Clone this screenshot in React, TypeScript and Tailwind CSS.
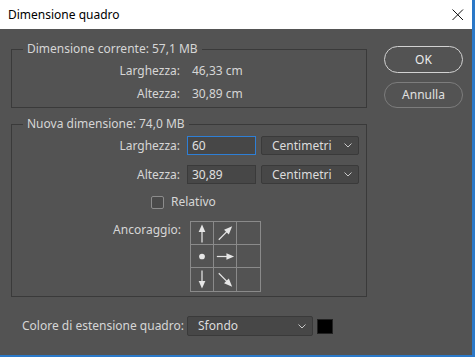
import React from "react";

const font = { fontFamily: '"Noto Sans", "Open Sans", sans-serif' };

function Chevron() {
  return (
    <svg width="8" height="5" viewBox="0 0 8 5" className="shrink-0">
      <path d="M0.5 0.5 L4 4 L7.5 0.5" fill="none" stroke="#c8c8c8" strokeWidth="1" />
    </svg>
  );
}

function Select({ label, w }: { label: string; w: string }) {
  return (
    <div className={`${w} h-[19px] flex items-center justify-between pl-[10px] pr-[6px] bg-[#474747] border border-[#3a3a3a] rounded-[2px] text-[#dcdcdc]`}>
      <span>{label}</span>
      <Chevron />
    </div>
  );
}

function Arrow({ kind }: { kind: string }) {
  const c = "#e6e6e6";
  let el: React.ReactNode = null;
  if (kind === "up")
    el = (
      <>
        <line x1="11.5" y1="21" x2="11.5" y2="7" stroke={c} strokeWidth="1.3" />
        <polygon points="11.5,2 8,10 15,10" fill={c} />
      </>
    );
  if (kind === "down")
    el = (
      <>
        <line x1="11.5" y1="2" x2="11.5" y2="16" stroke={c} strokeWidth="1.3" />
        <polygon points="11.5,21 8,13 15,13" fill={c} />
      </>
    );
  if (kind === "right")
    el = (
      <>
        <line x1="3" y1="11.5" x2="17" y2="11.5" stroke={c} strokeWidth="1.3" />
        <polygon points="21,11.5 13,8 13,15" fill={c} />
      </>
    );
  if (kind === "ne")
    el = (
      <>
        <line x1="5" y1="18" x2="15" y2="8" stroke={c} strokeWidth="1.3" />
        <polygon points="19,4 10.5,7.5 15.5,12.5" fill={c} />
      </>
    );
  if (kind === "se")
    el = (
      <>
        <line x1="5" y1="5" x2="15" y2="15" stroke={c} strokeWidth="1.3" />
        <polygon points="19,19 10.5,15.5 15.5,10.5" fill={c} />
      </>
    );
  if (kind === "dot") el = <circle cx="11.5" cy="11.5" r="3" fill={c} />;
  return (
    <svg width="23" height="23" viewBox="0 0 23 23">
      {el}
    </svg>
  );
}

export default function App() {
  const cells = ["up", "ne", "", "dot", "right", "", "down", "se", ""];
  return (
    <div
      className="w-[475px] h-[357px] overflow-hidden bg-[#535353] text-[12px] text-[#d6d6d6] border-r-[3px] border-b-[2px] border-[#2a78c8] flex flex-col"
      style={font}
    >
      <div className="h-[29px] shrink-0 bg-white flex items-center justify-between pl-[8px] pr-[8px] text-black text-[12px]">
        <span>Dimensione quadro</span>
        <svg width="12" height="12" viewBox="0 0 12 12">
          <path d="M0.5 0.5 L11 11 M11 0.5 L0.5 11" stroke="#111" strokeWidth="1" />
        </svg>
      </div>
      <div className="flex flex-1 pt-[12px]">
        <div className="w-[356px] ml-[11px] flex flex-col">
          <fieldset className="h-[67px] border border-[#3a3a3a] pl-0">
            <legend className="ml-[11px] px-[4px] leading-[16px]">Dimensione corrente: 57,1 MB</legend>
            <div className="flex flex-col gap-[6px] pt-[5px]">
              <div className="flex leading-[17px]">
                <span className="w-[168px] text-right">Larghezza:</span>
                <span className="ml-[12px]">46,33 cm</span>
              </div>
              <div className="flex leading-[17px]">
                <span className="w-[168px] text-right">Altezza:</span>
                <span className="ml-[12px]">30,89 cm</span>
              </div>
            </div>
          </fieldset>
          <fieldset className="mt-[8px] h-[181px] border border-[#3a3a3a]">
            <legend className="ml-[11px] px-[4px] leading-[16px]">Nuova dimensione: 74,0 MB</legend>
            <div className="flex flex-col pt-[4px]">
              <div className="flex items-center h-[19px]">
                <span className="w-[168px] text-right">Larghezza:</span>
                <div className="ml-[7px] w-[69px] h-[19px] flex items-center pl-[4px] bg-[#474747] border border-[#2e7fd6] text-[#e0e0e0]">
                  60
                </div>
                <div className="ml-[5px]">
                  <Select label="Centimetri" w="w-[98px]" />
                </div>
              </div>
              <div className="flex items-center h-[19px] mt-[10px]">
                <span className="w-[168px] text-right">Altezza:</span>
                <div className="ml-[7px] w-[69px] h-[19px] flex items-center pl-[4px] bg-[#474747] border border-[#3a3a3a] text-[#e0e0e0]">
                  30,89
                </div>
                <div className="ml-[5px]">
                  <Select label="Centimetri" w="w-[98px]" />
                </div>
              </div>
              <div className="flex items-center h-[14px] mt-[11px] pl-[139px]">
                <div className="w-[13px] h-[13px] border border-[#8c8c8c] rounded-[2px] bg-[#4a4a4a]" />
                <span className="ml-[7px]">Relativo</span>
              </div>
              <div className="flex mt-[12px]">
                <span className="w-[169px] text-right leading-[17px] pt-[0px]">Ancoraggio:</span>
                <div className="ml-[9px] grid grid-cols-[23px_23px_23px] grid-rows-[23px_23px_23px] border border-[#8a8a8a] w-[71px] h-[71px]">
                  {cells.map((k, i) => (
                    <div
                      key={i}
                      className={`flex items-center justify-center ${i % 3 !== 2 ? "border-r" : ""} ${i < 6 ? "border-b" : ""} border-[#8a8a8a]`}
                    >
                      {k && <Arrow kind={k} />}
                    </div>
                  ))}
                </div>
              </div>
            </div>
          </fieldset>
          <div className="flex items-center mt-[19px]">
            <span className="w-[176px] pl-[11px] whitespace-nowrap">Colore di estensione quadro:</span>
            <div className="w-[126px] h-[20px] flex items-center justify-between pl-[10px] pr-[6px] bg-[#474747] border border-[#3a3a3a] rounded-[2px] text-[#dcdcdc]">
              <span>Sfondo</span>
              <Chevron />
            </div>
            <div className="ml-[4px] w-[16px] h-[15px] bg-black border border-[#222]" />
          </div>
        </div>
        <div className="ml-[17px] pt-[5px] flex flex-col gap-[9px]">
          <div className="w-[79px] h-[27px] rounded-full border-[1.5px] border-[#d2d2d2] flex items-center justify-center text-[#ececec]">
            OK
          </div>
          <div className="w-[79px] h-[26px] rounded-full border border-[#7c7c7c] flex items-center justify-center text-[#e0e0e0]">
            Annulla
          </div>
        </div>
      </div>
    </div>
  );
}
